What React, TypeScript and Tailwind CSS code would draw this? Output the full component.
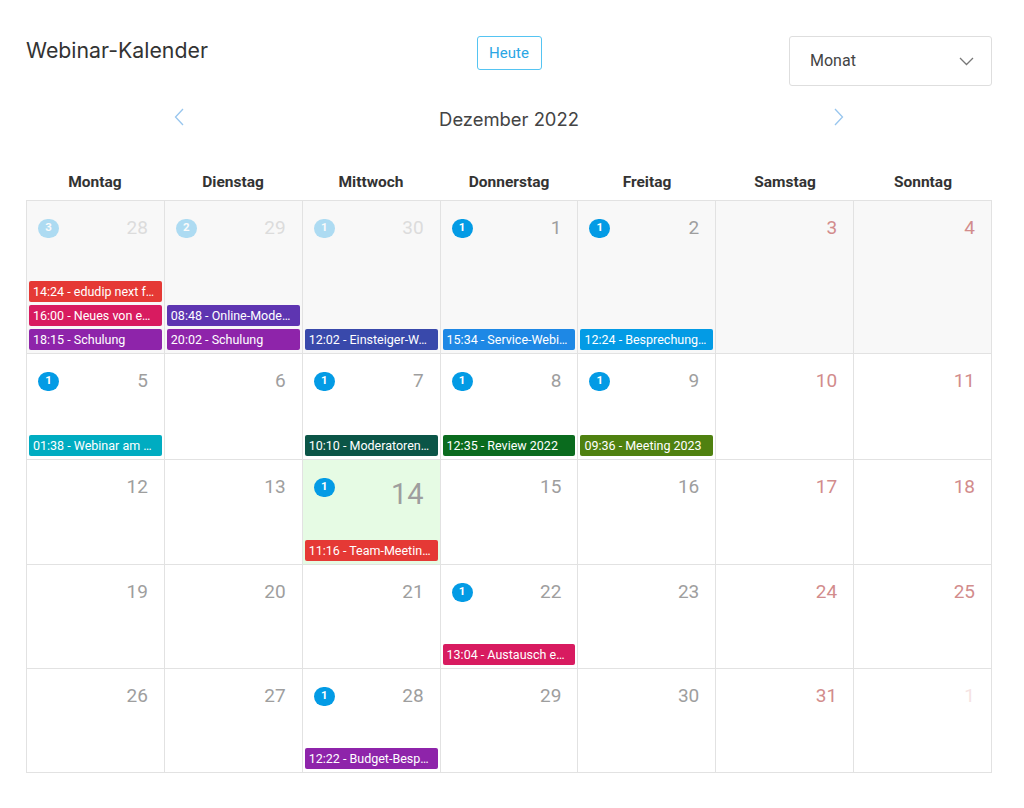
import React from "react";

type Ev = { t: string; c: string };
type Day = {
  n: number;
  ev?: Ev[];
  other?: boolean;
  weekend?: boolean;
  today?: boolean;
  past?: boolean;
};

const RED = "#e53935";
const PINK = "#d81b60";
const PURPLE = "#8e24aa";
const DPURPLE = "#5e35b1";
const INDIGO = "#3949ab";
const BLUE = "#1e88e5";
const LBLUE = "#039be5";
const CYAN = "#00acc1";
const TEAL = "#0b5547";
const GREEN = "#0a6b1e";
const OLIVE = "#4f8110";

const weeks: { h: string; days: Day[] }[] = [
  {
    h: "h-[153px]",
    days: [
      { n: 28, other: true, past: true, ev: [
        { t: "14:24 - edudip next f…", c: RED },
        { t: "16:00 - Neues von e…", c: PINK },
        { t: "18:15 - Schulung", c: PURPLE },
      ] },
      { n: 29, other: true, past: true, ev: [
        { t: "08:48 - Online-Mode…", c: DPURPLE },
        { t: "20:02 - Schulung", c: PURPLE },
      ] },
      { n: 30, other: true, past: true, ev: [{ t: "12:02 - Einsteiger-W…", c: INDIGO }] },
      { n: 1, past: true, ev: [{ t: "15:34 - Service-Webi…", c: BLUE }] },
      { n: 2, past: true, ev: [{ t: "12:24 - Besprechung…", c: LBLUE }] },
      { n: 3, past: true, weekend: true },
      { n: 4, past: true, weekend: true },
    ],
  },
  {
    h: "h-[106px]",
    days: [
      { n: 5, ev: [{ t: "01:38 - Webinar am …", c: CYAN }] },
      { n: 6 },
      { n: 7, ev: [{ t: "10:10 - Moderatoren…", c: TEAL }] },
      { n: 8, ev: [{ t: "12:35 - Review 2022", c: GREEN }] },
      { n: 9, ev: [{ t: "09:36 - Meeting 2023", c: OLIVE }] },
      { n: 10, weekend: true },
      { n: 11, weekend: true },
    ],
  },
  {
    h: "h-[105px]",
    days: [
      { n: 12 },
      { n: 13 },
      { n: 14, today: true, ev: [{ t: "11:16 - Team-Meetin…", c: RED }] },
      { n: 15 },
      { n: 16 },
      { n: 17, weekend: true },
      { n: 18, weekend: true },
    ],
  },
  {
    h: "h-[104px]",
    days: [
      { n: 19 },
      { n: 20 },
      { n: 21 },
      { n: 22, ev: [{ t: "13:04 - Austausch e…", c: PINK }] },
      { n: 23 },
      { n: 24, weekend: true },
      { n: 25, weekend: true },
    ],
  },
  {
    h: "h-[104px]",
    days: [
      { n: 26 },
      { n: 27 },
      { n: 28, ev: [{ t: "12:22 - Budget-Besp…", c: PURPLE }] },
      { n: 29 },
      { n: 30 },
      { n: 31, weekend: true },
      { n: 1, weekend: true, other: true },
    ],
  },
];

const dayNames = ["Montag", "Dienstag", "Mittwoch", "Donnerstag", "Freitag", "Samstag", "Sonntag"];

function Cell({ d }: { d: Day }) {
  const count = d.ev?.length ?? 0;
  let numColor = "text-[#9e9e9e]";
  if (d.weekend) numColor = d.other ? "text-[#f5e3e3]" : "text-[#d28c8c]";
  else if (d.other) numColor = "text-[#dcdcdc]";
  const bg = d.today ? "bg-[#e6fbe4]" : d.past ? "bg-[#f8f8f8]" : "bg-white";
  return (
    <div className={`flex flex-col justify-between border-r border-b border-[#e2e2e2] ${bg}`}>
      <div className="flex items-start justify-between pl-[11px] pr-[16px] pt-[17px]">
        <div className="h-[20px] flex items-center">
          {count > 0 && (
            <span
              className={`flex h-[19px] w-[21px] items-center justify-center rounded-full bg-[#039be5] text-[11.5px] font-bold leading-none text-white ${d.other ? "opacity-30" : ""}`}
            >
              {count}
            </span>
          )}
        </div>
        {d.today ? (
          <span className={`text-[29px] leading-[34px] ${numColor}`}>{d.n}</span>
        ) : (
          <span className={`text-[19px] leading-[20px] ${numColor}`}>{d.n}</span>
        )}
      </div>
      <div className="flex flex-col gap-[3px] px-[2px] pb-[3px]">
        {d.ev?.map((e, i) => (
          <div
            key={i}
            className="h-[21px] truncate rounded-[2px] pl-[4px] text-[12.5px] leading-[21px] text-white"
            style={{ backgroundColor: e.c }}
          >
            {e.t}
          </div>
        ))}
      </div>
    </div>
  );
}

export default function App() {
  return (
    <div className="min-h-[808px] w-[1024px] bg-white px-[26px] pt-[36px]" style={{ fontFamily: "Roboto, 'Liberation Sans', sans-serif" }}>
      <div className="grid w-[966px] grid-cols-3 items-start">
        <h1 className="pt-[0px] text-[21.3px] leading-[28px] text-[#333]" style={{ fontFamily: "Inter, 'Open Sans', sans-serif" }}>
          Webinar-Kalender
        </h1>
        <div className="flex justify-center">
          <button className="h-[34px] w-[65px] rounded-[3px] border border-[#55c4f2] text-[15px] text-[#2aa6e4]">
            Heute
          </button>
        </div>
        <div className="flex justify-end">
          <div className="flex h-[50px] w-[203px] items-center justify-between rounded-[3px] border border-[#dedede] pl-[20px] pr-[17px] text-[16px] text-[#444]">
            <span>Monat</span>
            <svg width="15" height="9" viewBox="0 0 15 9" fill="none" stroke="#777" strokeWidth="1.3">
              <path d="M1 1l6.5 6.5L14 1" />
            </svg>
          </div>
        </div>
      </div>

      <div className="mt-[17px] flex w-[966px] items-center justify-between px-[148px] h-[34px]">
        <svg width="10" height="18" viewBox="0 0 10 18" fill="none" stroke="#98c6ee" strokeWidth="1.3" className="-mt-[6px]">
          <path d="M9 1L1.5 9 9 17" />
        </svg>
        <span className="text-[18.4px] text-[#444]" style={{ fontFamily: "Inter, 'Open Sans', sans-serif" }}>
          Dezember 2022
        </span>
        <svg width="10" height="18" viewBox="0 0 10 18" fill="none" stroke="#98c6ee" strokeWidth="1.3" className="-mt-[6px]">
          <path d="M1 1l7.5 8L1 17" />
        </svg>
      </div>

      <div className="mt-[29px] grid w-[966px] grid-cols-7 h-[34px] items-center">
        {dayNames.map((n) => (
          <div key={n} className="text-center text-[15.5px] font-bold text-[#333]">
            {n}
          </div>
        ))}
      </div>

      <div className="w-[966px] border-t border-l border-[#e2e2e2]">
        {weeks.map((w, i) => (
          <div key={i} className={`grid grid-cols-7 ${w.h}`}>
            {w.days.map((d, j) => (
              <Cell key={j} d={d} />
            ))}
          </div>
        ))}
      </div>
    </div>
  );
}
